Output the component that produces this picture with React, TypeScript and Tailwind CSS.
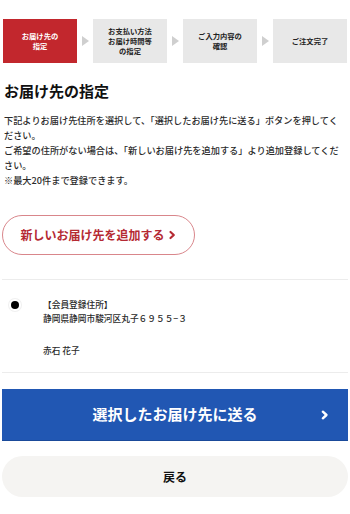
import React from "react";

const steps = [
  { label: ["お届け先の", "指定"], active: true },
  { label: ["お支払い方法", "お届け時間等", "の指定"], active: false },
  { label: ["ご入力内容の", "確認"], active: false },
  { label: ["ご注文完了"], active: false },
];

function Chevron({ className }: { className?: string }) {
  return (
    <svg viewBox="0 0 10 10" className={className} fill="none" stroke="currentColor" strokeWidth="2.2" strokeLinecap="round" strokeLinejoin="round">
      <path d="M3.5 2 L6.8 5 L3.5 8" />
    </svg>
  );
}

export default function App() {
  return (
    <div
      className="w-[350px] h-[514px] bg-white text-[#333] overflow-hidden"
      style={{ fontFamily: '"Noto Sans CJK JP", "Noto Sans", sans-serif' }}
    >
      {/* Steps */}
      <div className="pt-[19px] px-[3px] grid grid-cols-4 gap-4">
        {steps.map((s, i) => (
          <div key={i} className="relative">
            <div
              className={
                "h-[44px] flex flex-col items-center justify-center text-[7.3px] leading-[10px] font-bold text-center " +
                (s.active ? "bg-[#c2272d] text-white" : "bg-[#e8e8e8] text-[#222]")
              }
            >
              {s.label.map((l, j) => (
                <span key={j}>{l}</span>
              ))}
            </div>
            {i < 3 && (
              <div className="absolute top-[17px] -right-[12px] w-0 h-0 border-y-[5px] border-y-transparent border-l-[7px] border-l-[#cfcfcf]" />
            )}
          </div>
        ))}
      </div>

      {/* Heading */}
      <h1 className="mt-[20px] px-[4px] text-[15px] leading-[16px] font-bold text-[#111]">お届け先の指定</h1>

      {/* Description */}
      <div className="mt-[14px] px-[4px] text-[9.2px] leading-[15px] text-[#2a2a2a] break-all font-medium">
        <p>下記よりお届け先住所を選択して、「選択したお届け先に送る」ボタンを押してください。</p>
        <p>ご希望の住所がない場合は、「新しいお届け先を追加する」より追加登録してください。</p>
        <p>※最大20件まで登録できます。</p>
      </div>

      {/* Add button */}
      <div className="mt-[27px] px-[2px]">
        <button className="w-[193px] h-[40px] rounded-full border-[1.5px] border-[#d9868b] bg-white text-[#b52a33] text-[12px] font-bold flex items-center justify-center gap-[2px]">
          <span>新しいお届け先を追加する</span>
          <Chevron className="w-[10px] h-[10px]" />
        </button>
      </div>

      {/* Address list */}
      <div className="mt-[24px] mx-[2px] border-t border-[#ececec]">
        <div className="flex pt-[18px] pb-[14px]">
          <div className="w-[41px] flex justify-start pl-[7px] pt-[1px]">
            <div className="w-[12px] h-[12px] rounded-full bg-white shadow-[0_0_0_1px_#f0f0f0] flex items-center justify-center">
              <div className="w-[8px] h-[8px] rounded-full bg-black" />
            </div>
          </div>
          <div className="text-[8.7px] leading-[14px] text-[#2a2a2a] font-medium">
            <p>【会員登録住所】</p>
            <p>静岡県静岡市駿河区丸子６９５５−３</p>
            <p className="mt-[18px]">赤石 花子</p>
          </div>
        </div>
      </div>
      <div className="mx-[2px] border-t border-[#ececec]" />

      {/* Submit */}
      <div className="mt-[16px] px-[2px]">
        <button className="relative w-full h-[52px] bg-[#2157b3] text-white text-[15px] font-bold flex items-center justify-center border-b border-[#1a4a9a]">
          <span>選択したお届け先に送る</span>
          <Chevron className="absolute right-[18px] top-1/2 -translate-y-1/2 w-[11px] h-[11px]" />
        </button>
      </div>

      {/* Back */}
      <div className="mt-[15px] px-[2px]">
        <button className="w-full h-[41px] rounded-full bg-[#f5f4f2] text-[#111] text-[12px] font-bold flex items-center justify-center">
          戻る
        </button>
      </div>
    </div>
  );
}
